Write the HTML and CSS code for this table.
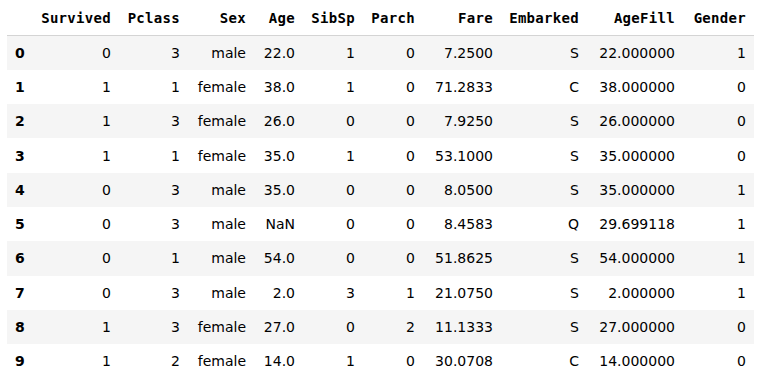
FILE: index.html
```html
<!DOCTYPE html>
<html lang="en">

<head>
    <meta charset="UTF-8">
    <title>train_df.head(10)</title>
    <link rel="stylesheet" href="styles.css">
</head>

<body>
    <div class="output">
        <table class="dataframe">
            <colgroup>
                <col class="c-idx">
                <col class="c-survived">
                <col class="c-pclass">
                <col class="c-sex">
                <col class="c-age">
                <col class="c-sibsp">
                <col class="c-parch">
                <col class="c-fare">
                <col class="c-embarked">
                <col class="c-agefill">
                <col class="c-gender">
            </colgroup>
            <thead>
                <tr>
                    <th></th>
                    <th>Survived</th>
                    <th>Pclass</th>
                    <th>Sex</th>
                    <th>Age</th>
                    <th>SibSp</th>
                    <th>Parch</th>
                    <th>Fare</th>
                    <th>Embarked</th>
                    <th>AgeFill</th>
                    <th>Gender</th>
                </tr>
            </thead>
            <tbody>
                <tr><th>0</th><td>0</td><td>3</td><td>male</td><td>22.0</td><td>1</td><td>0</td><td>7.2500</td><td>S</td><td>22.000000</td><td>1</td></tr>
                <tr><th>1</th><td>1</td><td>1</td><td>female</td><td>38.0</td><td>1</td><td>0</td><td>71.2833</td><td>C</td><td>38.000000</td><td>0</td></tr>
                <tr><th>2</th><td>1</td><td>3</td><td>female</td><td>26.0</td><td>0</td><td>0</td><td>7.9250</td><td>S</td><td>26.000000</td><td>0</td></tr>
                <tr><th>3</th><td>1</td><td>1</td><td>female</td><td>35.0</td><td>1</td><td>0</td><td>53.1000</td><td>S</td><td>35.000000</td><td>0</td></tr>
                <tr><th>4</th><td>0</td><td>3</td><td>male</td><td>35.0</td><td>0</td><td>0</td><td>8.0500</td><td>S</td><td>35.000000</td><td>1</td></tr>
                <tr><th>5</th><td>0</td><td>3</td><td>male</td><td>NaN</td><td>0</td><td>0</td><td>8.4583</td><td>Q</td><td>29.699118</td><td>1</td></tr>
                <tr><th>6</th><td>0</td><td>1</td><td>male</td><td>54.0</td><td>0</td><td>0</td><td>51.8625</td><td>S</td><td>54.000000</td><td>1</td></tr>
                <tr><th>7</th><td>0</td><td>3</td><td>male</td><td>2.0</td><td>3</td><td>1</td><td>21.0750</td><td>S</td><td>2.000000</td><td>1</td></tr>
                <tr><th>8</th><td>1</td><td>3</td><td>female</td><td>27.0</td><td>0</td><td>2</td><td>11.1333</td><td>S</td><td>27.000000</td><td>0</td></tr>
                <tr><th>9</th><td>1</td><td>2</td><td>female</td><td>14.0</td><td>1</td><td>0</td><td>30.0708</td><td>C</td><td>14.000000</td><td>0</td></tr>
            </tbody>
        </table>
    </div>
</body>
</html>
```

FILE: styles.css
```css
body {
    background: #fff;
    color: #000;
    font-family: 'DejaVu Sans', 'Noto Sans CJK JP', sans-serif;
    margin: 0;
    padding: 0;
}

.output {
    padding-left: 7px;
}

.dataframe {
    border-collapse: collapse;
    table-layout: fixed;
    width: 747px;
    font-size: 14px;
}

.c-idx { width: 26px; }
.c-survived { width: 86px; }
.c-pclass { width: 69px; }
.c-sex { width: 66px; }
.c-age { width: 49px; }
.c-sibsp { width: 60px; }
.c-parch { width: 60px; }
.c-fare { width: 78px; }
.c-embarked { width: 86px; }
.c-agefill { width: 96px; }
.c-gender { width: 71px; }

.dataframe th,
.dataframe td {
    padding: 0 8px 0 0;
    text-align: right;
    vertical-align: middle;
    white-space: nowrap;
    overflow: visible;
}

/* column names - looks like a gothic mono face */
.dataframe thead th {
    height: 35px;
    font-family: 'DejaVu Sans Mono', monospace;
    font-size: 14px;
    font-weight: bold;
    letter-spacing: 0.3px;
    padding-right: 8px;
    border-bottom: 1px solid #d4d4d4;
}

.dataframe tbody tr {
    height: 34.3px;
}

.dataframe tbody tr:nth-child(odd) {
    background: #f5f5f5;
}

.dataframe tbody th {
    text-align: left;
    padding-left: 8px;
    font-weight: bold;
}
```
